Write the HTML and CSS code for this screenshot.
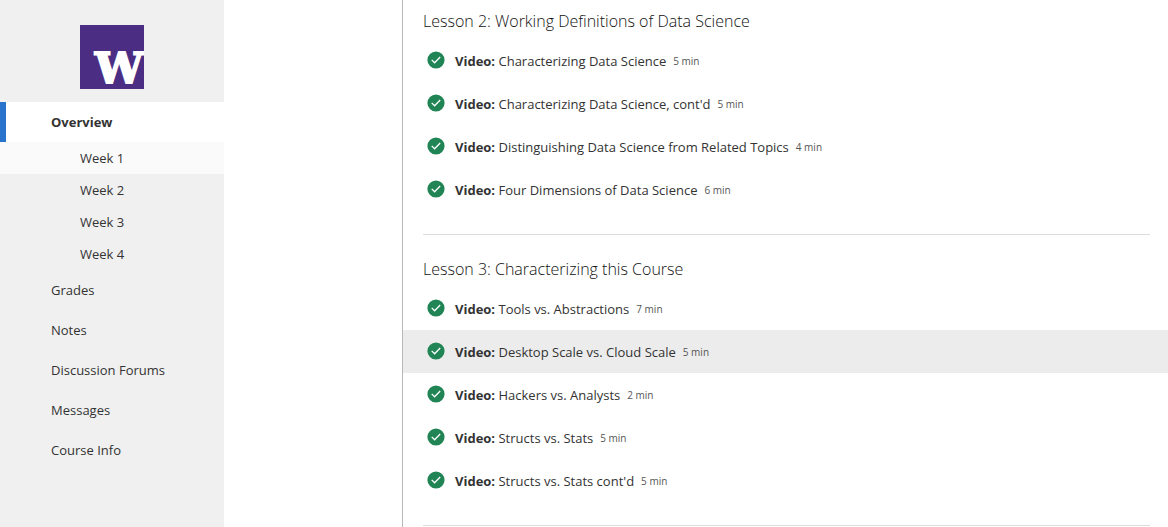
FILE: index.html
```html
<!DOCTYPE html>
<html lang="en">
<head>
<meta charset="utf-8">
<title>Course overview</title>
<link rel="stylesheet" href="styles.css">
</head>
<body>
<svg class="symbols" aria-hidden="true">
  <symbol id="check" viewBox="0 0 18 18">
    <circle cx="9" cy="9" r="8.6" fill="#208455"/>
    <path d="M4.7 8.9 7.6 11.8 13.2 6" fill="none" stroke="#fff" stroke-width="1.3"/>
  </symbol>
</svg>
<div class="page">
  <aside class="sidebar">
    <svg class="logo" viewBox="0 0 64 64" role="img" aria-label="University logo">
      <rect width="64" height="64" fill="#4b2e83"/>
      <text class="logo-letter" x="15" y="58">W</text>
    </svg>
    <nav>
      <ul class="menu">
        <li><a class="item active" href="#overview">Overview</a>
          <ul class="menu">
            <li><a class="week current" href="#week1">Week 1</a></li>
            <li><a class="week" href="#week2">Week 2</a></li>
            <li><a class="week" href="#week3">Week 3</a></li>
            <li><a class="week" href="#week4">Week 4</a></li>
          </ul>
        </li>
        <li><a class="item" href="#grades">Grades</a></li>
        <li><a class="item" href="#notes">Notes</a></li>
        <li><a class="item" href="#forums">Discussion Forums</a></li>
        <li><a class="item" href="#messages">Messages</a></li>
        <li><a class="item" href="#info">Course Info</a></li>
      </ul>
    </nav>
  </aside>
  <main class="content">
    <section class="lesson">
      <h2 class="lesson-title">Lesson 2: Working Definitions of Data Science</h2>
      <ul class="videos">
        <li><a class="video" href="#v1"><svg class="check"><use href="#check"/></svg><span><strong>Video:</strong> Characterizing Data Science</span><span class="time">5 min</span></a></li>
        <li><a class="video" href="#v2"><svg class="check"><use href="#check"/></svg><span><strong>Video:</strong> Characterizing Data Science, cont'd</span><span class="time">5 min</span></a></li>
        <li><a class="video" href="#v3"><svg class="check"><use href="#check"/></svg><span><strong>Video:</strong> Distinguishing Data Science from Related Topics</span><span class="time">4 min</span></a></li>
        <li><a class="video" href="#v4"><svg class="check"><use href="#check"/></svg><span><strong>Video:</strong> Four Dimensions of Data Science</span><span class="time">6 min</span></a></li>
      </ul>
      <hr class="divider">
    </section>
    <section class="lesson">
      <h2 class="lesson-title">Lesson 3: Characterizing this Course</h2>
      <ul class="videos">
        <li><a class="video" href="#v5"><svg class="check"><use href="#check"/></svg><span><strong>Video:</strong> Tools vs. Abstractions</span><span class="time">7 min</span></a></li>
        <li><a class="video selected" href="#v6"><svg class="check"><use href="#check"/></svg><span><strong>Video:</strong> Desktop Scale vs. Cloud Scale</span><span class="time">5 min</span></a></li>
        <li><a class="video" href="#v7"><svg class="check"><use href="#check"/></svg><span><strong>Video:</strong> Hackers vs. Analysts</span><span class="time">2 min</span></a></li>
        <li><a class="video" href="#v8"><svg class="check"><use href="#check"/></svg><span><strong>Video:</strong> Structs vs. Stats</span><span class="time">5 min</span></a></li>
        <li><a class="video" href="#v9"><svg class="check"><use href="#check"/></svg><span><strong>Video:</strong> Structs vs. Stats cont'd</span><span class="time">5 min</span></a></li>
      </ul>
      <hr class="divider">
    </section>
  </main>
</div>
</body>
</html>
```

FILE: styles.css
```css
* {
  box-sizing: border-box;
}

body {
  margin: 0;
  background: #fff;
  color: #333;
  font: 13px/20px "Open Sans", "Noto Sans", sans-serif;
}

a {
  color: inherit;
  text-decoration: none;
}

.symbols {
  display: none;
}

.page {
  display: flex;
  min-height: 100vh;
}

.sidebar {
  flex: 0 0 224px;
  padding-top: 25px;
  background: #f0f0f0;
}

.logo {
  display: block;
  width: 64px;
  height: 64px;
  margin: 0 auto 13px 80px;
}

.logo-letter {
  fill: #fff;
  stroke: #fff;
  stroke-width: 2px;
  font: bold 43px "DejaVu Serif", serif;
}

.menu,
.videos {
  margin: 0;
  padding: 0;
  list-style: none;
}

.item {
  display: block;
  padding: 10px 10px 10px 45px;
  border-left: 6px solid transparent;
}

.active {
  border-left-color: #2a73cc;
  background: #fff;
  font-weight: 700;
}

.week {
  display: block;
  padding: 6px 10px 6px 80px;
}

.current {
  background: #fafafa;
}

.content {
  flex: 1;
  min-width: 0;
  margin-left: 178px;
  border-left: 1px solid #b8b8b8;
}

.lesson-title {
  margin: 0;
  padding: 9px 20px 6px;
  color: #111;
  font-size: 16px;
  font-weight: 300;
  line-height: 24px;
}

.lesson + .lesson .lesson-title {
  padding-top: 22px;
}

.video {
  display: flex;
  align-items: center;
  min-height: 43px;
  padding: 0 18px 0 24px;
}

.selected {
  background: #ececec;
}

.check {
  flex: none;
  width: 18px;
  height: 18px;
  margin: 0 10px 2px 0;
}

.time {
  margin-left: 7px;
  color: #555;
  font-size: 10px;
}

.divider {
  height: 1px;
  margin: 23px 18px 0 20px;
  border: 0;
  background: #ddd;
}
```
